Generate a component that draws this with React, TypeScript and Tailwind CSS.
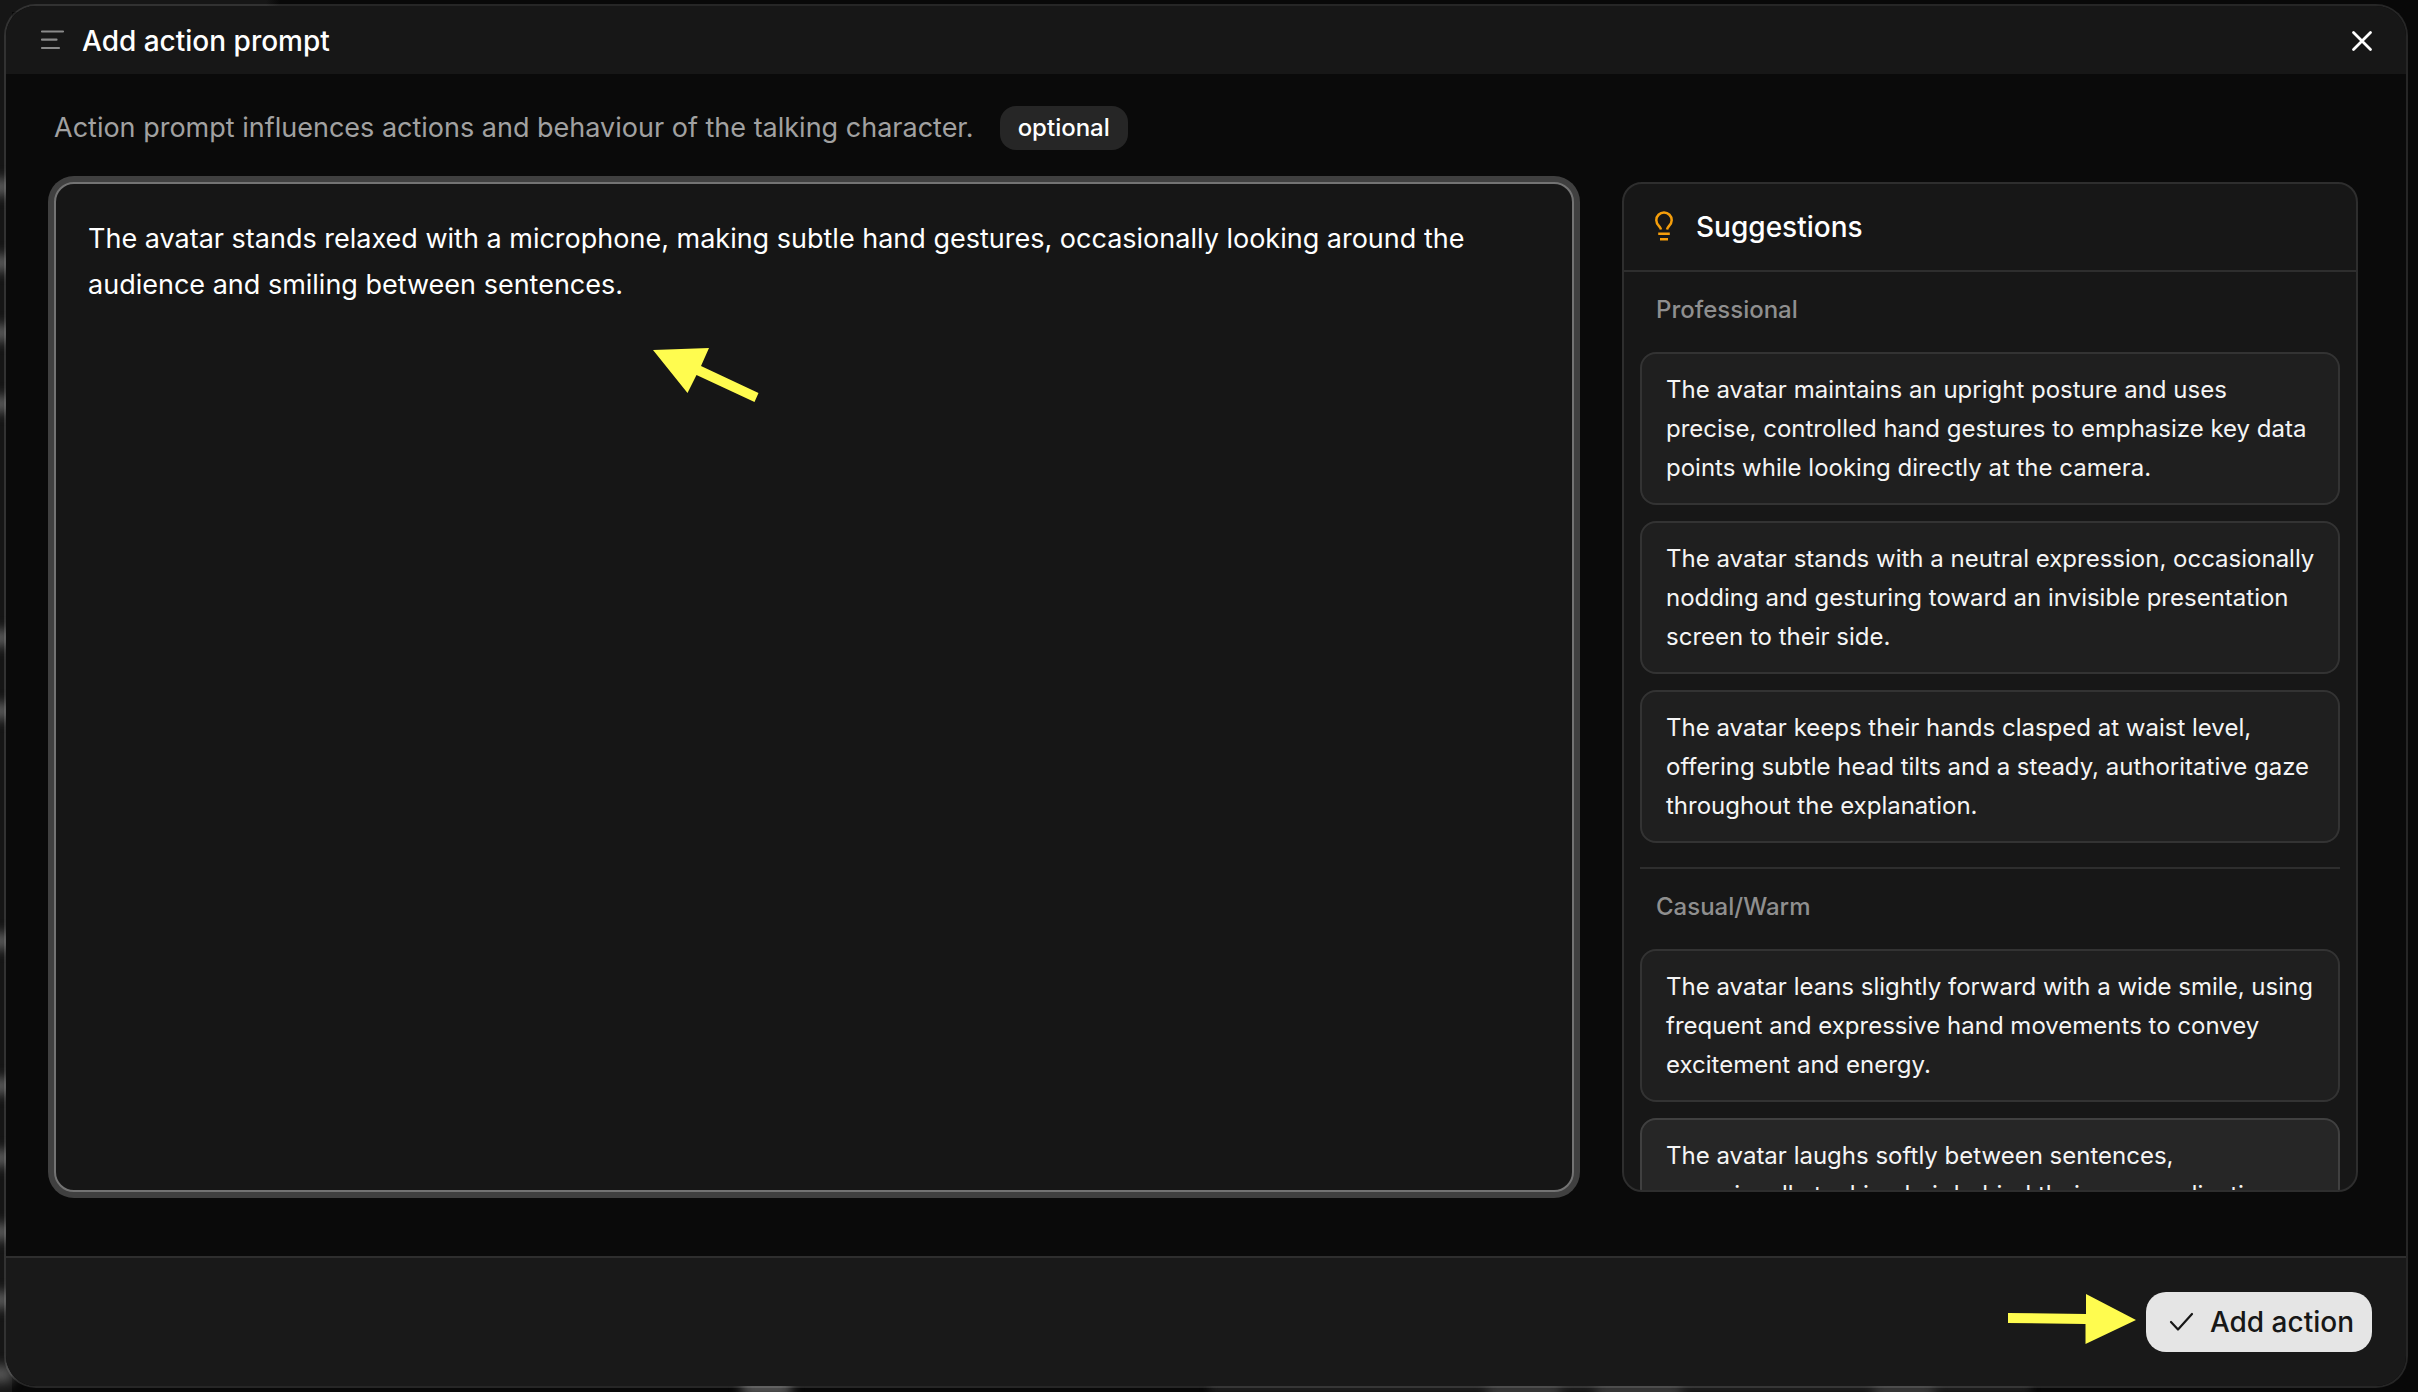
import { useState } from "react";

const SUGGESTIONS = [
  {
    title: "Professional",
    items: [
      "The avatar maintains an upright posture and uses precise, controlled hand gestures to emphasize key data points while looking directly at the camera.",
      "The avatar stands with a neutral expression, occasionally nodding and gesturing toward an invisible presentation screen to their side.",
      "The avatar keeps their hands clasped at waist level, offering subtle head tilts and a steady, authoritative gaze throughout the explanation.",
    ],
  },
  {
    title: "Casual/Warm",
    items: [
      "The avatar leans slightly forward with a wide smile, using frequent and expressive hand movements to convey excitement and energy.",
      "The avatar laughs softly between sentences, occasionally tucking hair behind their ear or adjusting their glasses.",
    ],
  },
];

// blurred page content that peeks out around the dialog, in % of the window
const LEFT_GLOWS = [13.4, 18.9, 23.9, 29, 45.8, 51.1, 67.6, 78, 83.2, 88.5, 93.4, 98.7];
const BOTTOM_GLOWS = [
  { left: 30.7, width: 2 },
  { left: 61.5, width: 3 },
  { left: 66, width: 3.5 },
  { left: 77.5, width: 2.5 },
];

function Backdrop() {
  return (
    <div aria-hidden="true" className="absolute inset-0 overflow-hidden">
      <div className="absolute inset-y-0 left-0 w-3 bg-[#161616]" />
      <div className="absolute top-0 left-0 h-3 w-[280px] bg-linear-to-r from-[#161616] from-95% to-transparent" />
      {LEFT_GLOWS.map((top) => (
        <div key={top} className="absolute -left-3 h-4 w-6 bg-[#5a5a5a] blur-[6px]" style={{ top: `calc(${top}% - 8px)` }} />
      ))}
      {BOTTOM_GLOWS.map((g) => (
        <div
          key={g.left}
          className="absolute -bottom-1 h-4 bg-[#5a5a5a] blur-[6px]"
          style={{ left: `${g.left}%`, width: `${g.width}%` }}
        />
      ))}
      <div className="absolute bottom-0 left-[50%] h-2 w-[34%] bg-[#262626] blur-[4px]" />
    </div>
  );
}

export default function App() {
  const [prompt, setPrompt] = useState(
    "The avatar stands relaxed with a microphone, making subtle hand gestures, occasionally looking around the audience and smiling between sentences."
  );

  return (
    <div className="relative h-screen overflow-hidden bg-[#080808] pt-1 pr-[10px] pb-1 pl-1 font-['Inter','Liberation_Sans',sans-serif] text-white">
      <Backdrop />

      <div
        role="dialog"
        aria-labelledby="dialog-title"
        className="relative flex h-full flex-col overflow-hidden rounded-[32px] border-2 border-white/12 bg-[#0a0a0a] bg-clip-padding"
      >
        <header className="flex h-[68px] shrink-0 items-center bg-[#171717] px-8 pt-0.5">
          <svg viewBox="0 0 28 28" className="size-7 text-[#8a8a8a]" fill="none" stroke="currentColor" strokeWidth="2.2" strokeLinecap="round">
            <path d="M4 4.500h21M4 12.700h14.500M4 21h17" />
          </svg>
          <h1 id="dialog-title" className="ml-4 text-[28px] leading-9 font-medium">
            Add action prompt
          </h1>
          <button aria-label="Close" className="ml-auto">
            <svg viewBox="0 0 24 24" className="size-6" fill="none" stroke="currentColor" strokeWidth="2.8" strokeLinecap="round">
              <path d="M3.500 3.500l17 17M20.500 3.500l-17 17" />
            </svg>
          </button>
        </header>

        <main className="flex min-h-0 flex-1 flex-col px-12 pb-16">
          <div className="flex h-[108px] shrink-0 items-center gap-[26px]">
            <label htmlFor="prompt" className="text-[27px] leading-9 text-[#a1a1a1]">
              Action prompt influences actions and behaviour of the talking character.
            </label>
            <span className="rounded-2xl bg-[#262626] px-[18px] py-1 text-[24px] leading-9 font-medium">optional</span>
          </div>

          <div className="flex min-h-0 flex-1 gap-12">
            <div className="relative flex min-w-0 flex-1">
              <textarea
                id="prompt"
                value={prompt}
                onChange={(e) => setPrompt(e.target.value)}
                className="min-w-0 flex-1 resize-none rounded-[20px] border-2 border-[#737373] bg-[#161616] px-8 py-8 text-[27px] leading-[46px] outline-none ring-6 ring-[#404040]"
              />
              <svg viewBox="0 0 106 54" className="pointer-events-none absolute top-[166px] left-[599px] w-[106px] text-[#fffc4f]">
                <path d="M0 2L56 0L48 18L105.500 45L101.500 54L43.500 27L34.500 45Z" fill="currentColor" />
              </svg>
            </div>

            <aside className="flex w-[736px] shrink-0 flex-col overflow-hidden rounded-[20px] border-2 border-[#2e2e2e] bg-[#171717]">
              <div className="flex h-[88px] shrink-0 items-center gap-4 border-b-2 border-[#2e2e2e] px-6">
                <svg viewBox="0 0 32 32" className="size-8 text-[#f59e0b]" fill="none" stroke="currentColor" strokeWidth="2.5">
                  <path d="M13 18.500c-.4-3-4.700-4.500-4.700-9.300a7.700 7.700 0 0 1 15.400 0c0 4.800-4.300 6.300-4.700 9.300" />
                  <path d="M10.200 22.700h11.600M12 28.300h8" />
                </svg>
                <h2 className="text-[28px] leading-9 font-medium">Suggestions</h2>
              </div>
              <div className="min-h-0 flex-1 overflow-hidden px-4">
                {SUGGESTIONS.map((group) => (
                  <section key={group.title} className="border-[#2e2e2e] not-last:border-b-2 not-last:pb-6">
                    <h3 className="px-4 pt-5 pb-6 text-[24px] leading-9 font-medium text-[#8f8f8f]">{group.title}</h3>
                    <div className="space-y-4">
                      {group.items.map((item) => (
                        <button
                          key={item}
                          onClick={() => setPrompt(item)}
                          className="block w-full rounded-2xl border-2 border-[#333] bg-[#1f1f1f] py-4 pr-5 pl-6 text-left text-[24px] leading-[39px] text-[#f5f5f5] last:in-[section:last-child]:border-[#404040] last:in-[section:last-child]:bg-[#262626]"
                        >
                          {item}
                        </button>
                      ))}
                    </div>
                  </section>
                ))}
              </div>
            </aside>
          </div>
        </main>

        <footer className="flex h-[130px] shrink-0 items-center justify-end gap-[10px] border-t-2 border-[#2e2e2e] bg-[#191919] pr-[34px]">
          <svg viewBox="0 0 128 50" className="mb-1.5 w-32 text-[#fffc4f]">
            <path d="M0 19L78 20V0L128 26L77.500 50V30L0 29Z" fill="currentColor" />
          </svg>
          <button className="flex h-[60px] items-center gap-4 rounded-[20px] bg-[#e5e5e5] pr-[18px] pl-5 text-[28px] font-medium text-[#171717]">
            <svg viewBox="0 0 28 28" className="size-7" fill="none" stroke="currentColor" strokeWidth="2.2" strokeLinecap="round" strokeLinejoin="round">
              <path d="M5 14l7 7.500L26 6" />
            </svg>
            Add action
          </button>
        </footer>
      </div>
    </div>
  );
}
